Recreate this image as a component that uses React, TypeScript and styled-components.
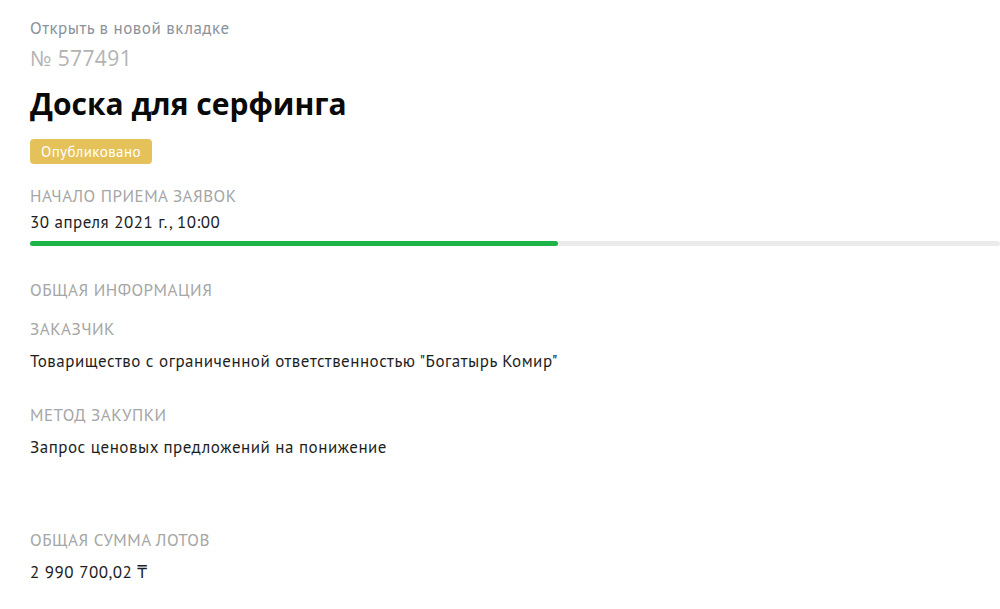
import React from 'react';
import styled, { createGlobalStyle } from 'styled-components';

const GlobalStyle = createGlobalStyle`
    body {
        margin: 0;
        background: #fff;
        font-family: 'PT Sans', 'Liberation Sans Narrow', 'DejaVu Sans Condensed', sans-serif;
    }
`;

const Page = styled.div`
    display: flex;
    flex-direction: column;
    align-items: flex-start;
    padding: 18px 0 0 30px;
    width: 1000px;
    box-sizing: border-box;
    overflow: hidden;
`;

const OpenLink = styled.a`
    color: #8c929b;
    font-size: 17px;
    letter-spacing: 0.5px;
    line-height: 20px;
    text-decoration: none;
    cursor: pointer;
`;

const Number = styled.div`
    color: #b3b3b3;
    font-family: 'Open Sans', sans-serif;
    font-size: 21px;
    letter-spacing: 0.4px;
    line-height: 24px;
    margin-top: 8px;
`;

const Title = styled.h1`
    margin: 15px 0 0;
    color: #0a0a0a;
    font-family: 'Open Sans', sans-serif;
    font-size: 30px;
    font-weight: 700;
    line-height: 38px;
`;

const Badge = styled.span`
    margin-top: 16px;
    padding: 0 11px;
    height: 25px;
    line-height: 25px;
    border-radius: 4px;
    background: #e5c15a;
    color: #fff;
    font-size: 15px;
    letter-spacing: 0.4px;
`;

const Section = styled.div<{ $gap?: number }>`
    display: flex;
    flex-direction: column;
    margin-top: ${props => props.$gap ?? 0}px;
`;

const Label = styled.div`
    color: #a6a6a6;
    font-size: 17px;
    letter-spacing: 0.5px;
    line-height: 22px;
    text-transform: uppercase;
`;

const Value = styled.div<{ $gap?: number }>`
    color: #1e1e1e;
    font-size: 17px;
    letter-spacing: 0.5px;
    line-height: 22px;
    margin-top: ${props => props.$gap ?? 10}px;
`;

const Track = styled.div`
    width: 970px;
    height: 5px;
    margin-top: 8px;
    background: #ebebeb;
    border-radius: 3px;
`;

const Fill = styled.div`
    height: 100%;
    background: #1db347;
    border-radius: 3px;
`;

const App = () => (
    <Page>
        <GlobalStyle />
        <OpenLink>Открыть в новой вкладке</OpenLink>
        <Number>№ 577491</Number>
        <Title>Доска для серфинга</Title>
        <Badge>Опубликовано</Badge>
        <Section $gap={21}>
            <Label>Начало приема заявок</Label>
            <Value $gap={4}>30 апреля 2021 г., 10:00</Value>
        </Section>
        <Track>
            <Fill style={{ width: `${(528 / 970) * 100}%` }} />
        </Track>
        <Section $gap={33}>
            <Label>Общая информация</Label>
        </Section>
        <Section $gap={17}>
            <Label>Заказчик</Label>
            <Value>Товарищество с ограниченной ответственностью "Богатырь Комир"</Value>
        </Section>
        <Section $gap={32}>
            <Label>Метод закупки</Label>
            <Value>Запрос ценовых предложений на понижение</Value>
        </Section>
        <Section $gap={71}>
            <Label>Общая сумма лотов</Label>
            <Value>2 990 700,02 ₸</Value>
        </Section>
    </Page>
);

export default App;
